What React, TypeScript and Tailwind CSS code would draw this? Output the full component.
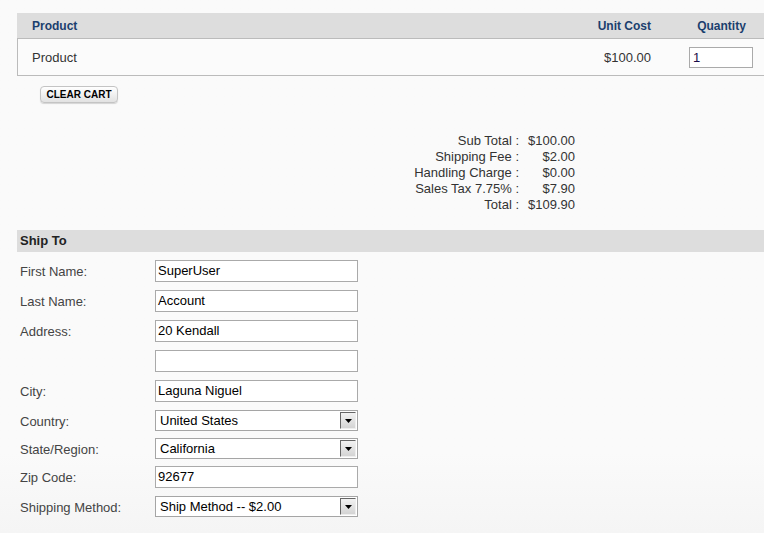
const font = { fontFamily: '"Liberation Sans", Arial, sans-serif' }

type Field = { label: string; value: string; kind: 'input' | 'select' }

const fields: Field[] = [
  { label: 'First Name:', value: 'SuperUser', kind: 'input' },
  { label: 'Last Name:', value: 'Account', kind: 'input' },
  { label: 'Address:', value: '20 Kendall', kind: 'input' },
  { label: '', value: '', kind: 'input' },
  { label: 'City:', value: 'Laguna Niguel', kind: 'input' },
  { label: 'Country:', value: 'United States', kind: 'select' },
  { label: 'State/Region:', value: 'California', kind: 'select' },
  { label: 'Zip Code:', value: '92677', kind: 'input' },
  { label: 'Shipping Method:', value: 'Ship Method -- $2.00', kind: 'select' },
]

const totals = [
  ['Sub Total :', '$100.00'],
  ['Shipping Fee :', '$2.00'],
  ['Handling Charge :', '$0.00'],
  ['Sales Tax 7.75% :', '$7.90'],
  ['Total :', '$109.90'],
]

export default function App() {
  return (
    <div
      className="min-h-[533px] bg-gradient-to-b from-[#fafafa] from-85% to-[#f5f5f5] pt-[13px] text-[13px] text-[#333]"
      style={font}
    >
      {/* cart table */}
      <div className="ml-[17px]">
        <div className="flex h-[26px] items-center border-b border-[#bbb] bg-[#dddddd] text-[12px] font-bold text-[#1b3f6e]">
          <div className="flex-1 pl-[15px]">Product</div>
          <div className="pr-[28px] text-right">Unit Cost</div>
          <div className="w-[85px] text-center">Quantity</div>
        </div>
        <div className="flex h-[37px] items-center border-b border-l border-[#bbb] bg-[#fbfbfb] pt-[1px] text-[#333]">
          <div className="flex-1 pl-[14px]">Product</div>
          <div className="pr-[28px] text-right">$100.00</div>
          <div className="flex w-[85px] justify-center pr-[1px]">
            <div className="flex h-[21px] w-[64px] items-center border border-[#aaa] bg-white pl-[3px] text-[#1a0d4a]">
              1
            </div>
          </div>
        </div>
      </div>

      <div className="ml-[40px] mt-[10px] flex h-[17px]">
        <button className="h-[17px] w-[78px] rounded-[4px] border border-[#c4c4c4] bg-gradient-to-b from-white to-[#e2e2e2] text-[10px] leading-none font-bold text-black shadow-[0_1px_1px_rgba(0,0,0,0.15)]">
          CLEAR CART
        </button>
      </div>

      {/* totals */}
      <div className="mt-[30px] grid grid-cols-[519px_56px] leading-[16px]">
        {totals.map(([k, v]) => (
          <div key={k} className="contents">
            <div className="text-right">{k}</div>
            <div className="text-right">{v}</div>
          </div>
        ))}
      </div>

      {/* ship to */}
      <div className="ml-[17px] mt-[17px] flex h-[22px] items-center bg-[#dddddd] pl-[3px] font-bold text-[#222]">
        Ship To
      </div>

      <div className="mt-[8px] pl-[20px]">
        {fields.map((f, i) => (
          <div key={i} className={`flex items-start ${f.kind === 'input' ? 'h-[30px]' : 'h-[28px]'}`}>
            <div className={`w-[135px] pt-[1px] text-[#444] ${f.kind === 'input' ? 'leading-[22px]' : 'leading-[21px]'}`}>
              {f.label}
            </div>
            {f.kind === 'input' ? (
              <div className="flex h-[22px] w-[203px] items-center border border-[#aaa] bg-white pl-[2px] text-black">
                {f.value}
              </div>
            ) : (
              <div className="flex h-[21px] w-[203px] items-center border border-[#a5a5a5] bg-white text-black">
                <div className="flex-1 pl-[4px]">{f.value}</div>
                <div className="mr-[1px] flex h-[17px] w-[16px] items-center justify-center border-t border-l border-[#666] border-r border-b border-r-[#eee] border-b-[#eee] bg-gradient-to-b from-[#f2f2f2] to-[#d4d4d4]">
                  <svg width="7" height="4" viewBox="0 0 7 4">
                    <path d="M0 0h7L3.5 4z" fill="#000" />
                  </svg>
                </div>
              </div>
            )}
          </div>
        ))}
      </div>
    </div>
  )
}
